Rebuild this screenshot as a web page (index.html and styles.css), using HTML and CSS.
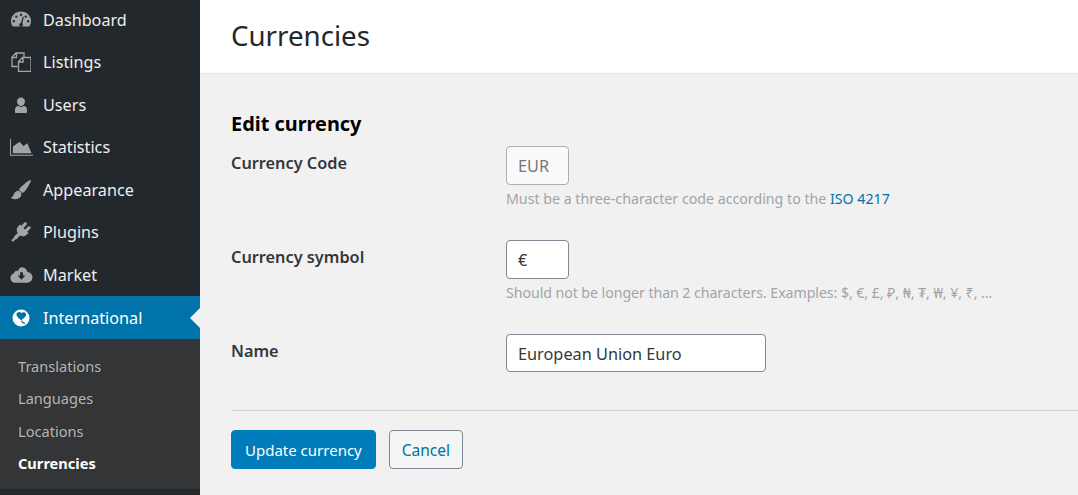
FILE: index.html
```html
<!DOCTYPE html>
<html lang="en">
<head>
  <meta charset="UTF-8">
  <meta name="viewport" content="width=device-width, initial-scale=1.0">
  <title>Currencies</title>
  <link rel="stylesheet" href="styles.css">
</head>
<body>
  <div class="admin">
    <nav class="sidebar">
      <ul class="menu">
        <li class="menu__item">
          <svg class="menu__icon" viewBox="0 0 20 20"><path fill-rule="evenodd" d="M10 1.500C4.500 1.500 0 5.700 0 11c0 1.800.4 3.400 1.200 4.800.3.500.8.800 1.400.8h14.800c.6 0 1.100-.3 1.400-.8.800-1.400 1.200-3 1.200-4.800 0-5.300-4.500-9.500-10-9.500zM10 3.500a1.200 1.200 0 1 1 0 2.400 1.200 1.200 0 0 1 0-2.400zM5.300 5.400a1.200 1.200 0 1 1 0 2.400 1.200 1.200 0 0 1 0-2.400zm9.400 0a1.200 1.200 0 1 1 0 2.400 1.200 1.200 0 0 1 0-2.400zM2.800 10a1.200 1.200 0 1 1 0 2.400 1.200 1.200 0 0 1 0-2.400zm14.400 0a1.200 1.200 0 1 1 0 2.400 1.200 1.200 0 0 1 0-2.400zM11.800 6.500l1 .3-1.500 6.600c.4.400.6.800.6 1.300 0 1-.8 1.800-1.800 1.800s-1.800-.8-1.800-1.800c0-.9.700-1.700 1.600-1.800z"/></svg>
          <span>Dashboard</span>
        </li>
        <li class="menu__item">
          <svg class="menu__icon" viewBox="0 0 20 20"><path class="menu__stroke" d="M6.500 14.500H1V5L5 1h8v4.500M5.500 1.500V5.500H1.500M12 5.500H11.500L7.500 9.500V19.500H20V5.500H12zM12 6V10H8"/></svg>
          <span>Listings</span>
        </li>
        <li class="menu__item">
          <svg class="menu__icon" viewBox="0 0 20 20"><path d="M10 2.500c2.300 0 4 1.800 4 4 0 2.100-1.700 4.500-4 4.500S6 8.600 6 6.500c0-2.200 1.700-4 4-4zM7.200 10.800c.7.700 1.700 1.200 2.800 1.200s2.100-.5 2.800-1.200c1.800.5 3.200 1.800 3.200 3.700V17c0 .6-.4 1-1 1H5c-.6 0-1-.4-1-1v-2.500c0-1.900 1.400-3.200 3.200-3.700z"/></svg>
          <span>Users</span>
        </li>
        <li class="menu__item">
          <svg class="menu__icon menu__icon--wide" viewBox="0 0 24 20"><path d="M0 1.500h1V18h23v1H0zM3 16.500V9.500L10 4.500 14 9 18 6 22.500 16.500z"/></svg>
          <span>Statistics</span>
        </li>
        <li class="menu__item">
          <svg class="menu__icon" viewBox="0 0 20 20"><path d="M18.600.2c.8-.4 1.500.3 1.200 1.100-1.300 2.900-3.600 7.400-6 10-.7.800-1.500 1.300-2.300 1.700L8 9.800c.4-1 1.100-1.900 1.900-2.700C12.500 4.600 15.900 1.700 18.600.2zM7.500 10.800c1.300 0 3 1.400 2.900 3.300-.1 3-2.800 5.200-5.900 5.200-2.100 0-3.800-.7-4.900-1.900 1.200 0 2.200-.6 2.700-1.800.9-2.100 2-4.800 5.200-4.800z"/></svg>
          <span>Appearance</span>
        </li>
        <li class="menu__item">
          <svg class="menu__icon" viewBox="0 0 20 20"><path d="M13.300.8c.6-.6 1.500-.6 2.100 0 .6.600.6 1.500 0 2.100l-3 3 1.700 1.700 3-3c.6-.6 1.500-.6 2.100 0 .6.600.6 1.500 0 2.100l-3 3 1.300 1.300-1.500 1.500c-2 2-4.900 2.400-7 1.100l-2.700 2.800c-.7.700-1.500 1.100-2.300 1.300L2 20 .3 18.300l2.300-2.200c.2-.8.600-1.600 1.300-2.300l2.800-2.800C5.100 8.900 5.500 6 7.500 4l1.500-1.500 1.300 1.300z"/></svg>
          <span>Plugins</span>
        </li>
        <li class="menu__item">
          <svg class="menu__icon menu__icon--wide" viewBox="0 0 24 20"><path fill-rule="evenodd" d="M12 2c3 0 5.500 2 6.200 4.800 2.900.2 5.300 2.500 5.300 5.500 0 3-2.500 5.700-5.500 5.700H5.500C2.700 18 .5 15.800.5 13c0-2.300 1.500-4.200 3.600-4.800C4.300 6.600 5.700 5.500 7.300 5.500c.4 0 .8 0 1.100.2C9.400 3.500 10.500 2 12 2zM10.500 7v3.500H8l4 4.500 4-4.500h-2.500V7z"/></svg>
          <span>Market</span>
        </li>
        <li class="menu__item menu__item--active">
          <svg class="menu__icon" viewBox="0 0 20 20"><path fill-rule="evenodd" d="M10 1.500a8.500 8.500 0 1 1 0 17 8.500 8.500 0 0 1 0-17zM6.500 4.500C5.700 5 5.300 6 5.500 7c.5 2 3 4 5 5.500 2-2.500 5-4 4.500-6.500-.5-2-3-2.300-4.500-1C9.500 4 8 3.500 6.500 4.500zM10 13.500c.8 1.100 2 2 3.500 2.400l1-.8c-1.500-.5-3-1.300-4-2.500z"/></svg>
          <span>International</span>
        </li>
      </ul>
      <ul class="submenu">
        <li class="submenu__item">Translations</li>
        <li class="submenu__item">Languages</li>
        <li class="submenu__item">Locations</li>
        <li class="submenu__item submenu__item--current">Currencies</li>
      </ul>
    </nav>

    <main class="main">
      <header class="page-header">
        <h1 class="page-title">Currencies</h1>
      </header>
      <div class="content">
        <h2 class="section-title">Edit currency</h2>
        <form class="form">
          <div class="form-row">
            <label class="form-label">Currency Code</label>
            <div class="form-field">
              <input class="input input--short input--disabled" type="text" value="EUR" readonly>
              <p class="hint">Must be a three-character code according to the <a class="link" href="#">ISO 4217</a></p>
            </div>
          </div>
          <div class="form-row">
            <label class="form-label">Currency symbol</label>
            <div class="form-field">
              <input class="input input--short" type="text" value="€">
              <p class="hint hint--tight">Should not be longer than 2 characters. Examples: $, €, £, ₽, ₦, ₮, ₩, ¥, ₹, ...</p>
            </div>
          </div>
          <div class="form-row">
            <label class="form-label">Name</label>
            <div class="form-field">
              <input class="input input--long" type="text" value="European Union Euro">
            </div>
          </div>
          <div class="form-actions">
            <button class="btn btn--primary" type="button">Update currency</button>
            <button class="btn btn--secondary" type="button">Cancel</button>
          </div>
        </form>
      </div>
    </main>
  </div>
</body>
</html>
```

FILE: styles.css
```css
* {
  box-sizing: border-box;
}

html, body {
  height: 100%;
}

body {
  margin: 0;
  overflow: hidden;
  background: #f1f1f1;
  font-family: "Noto Sans", "Open Sans", sans-serif;
  color: #23282d;
}

.admin {
  display: flex;
  height: 100%;
}

/* sidebar */
.sidebar {
  flex: 0 0 200px;
  background: #23282d;
  color: #eee;
}

.menu, .submenu {
  list-style: none;
  margin: 0;
  padding: 0;
}

.menu {
  margin-top: -1.5px;
}

.menu__item {
  position: relative;
  display: flex;
  align-items: center;
  height: 42.5px;
  padding-left: 11px;
  font-size: 16.2px;
  color: #eee;
}

.menu__icon {
  flex: 0 0 20px;
  width: 20px;
  height: 20px;
  margin-right: 12px;
  fill: #a0a5aa;
}

.menu__stroke {
  fill: none;
  stroke: #a0a5aa;
  stroke-width: 1.3;
}

.menu__icon--wide {
  flex-basis: 23px;
  width: 23px;
  margin-left: -1px;
  margin-right: 10px;
}

.menu__item--active {
  height: 43px;
  background: #0073aa;
  color: #fff;
}

.menu__item--active .menu__icon {
  fill: #fff;
}

.menu__item--active::after {
  content: "";
  position: absolute;
  right: 0;
  top: 50%;
  margin-top: -10px;
  border: 10px solid transparent;
  border-right-color: #f1f1f1;
  border-left-width: 0;
}

.submenu {
  background: #343536;
  padding: 11px 0 9.4px;
}

.submenu__item {
  height: 32.4px;
  line-height: 32.4px;
  padding-left: 18px;
  font-size: 14.6px;
  color: #b4b4b4;
}

.submenu__item--current {
  color: #fff;
  font-weight: 700;
}

/* main */
.main {
  flex: 1;
  min-width: 0;
}

.page-header {
  height: 74px;
  padding: 0 0 0 31px;
  background: #fff;
  border-bottom: 1px solid #e5e5e5;
  display: flex;
  align-items: center;
}

.page-title {
  margin: 0 0 4px;
  font-size: 27.7px;
  font-weight: 400;
  color: #23282d;
}

.content {
  padding: 36px 0 0 31px;
}

.section-title {
  margin: 0 0 8px;
  font-size: 19.9px;
  line-height: 28px;
  font-weight: 700;
  color: #000;
}

.form-row {
  display: grid;
  grid-template-columns: 275px 1fr;
  margin-bottom: 31px;
}

.form-label {
  font-size: 16.3px;
  font-weight: 600;
  line-height: 34px;
  color: #32373c;
}

.form-field {
  min-width: 0;
}

.input {
  display: block;
  height: 39px;
  padding: 1px 11px 0;
  border: 1px solid #7e8993;
  border-radius: 4px;
  background: #fff;
  font-family: inherit;
  font-size: 16.3px;
  color: #32373c;
}

.input--short {
  width: 63px;
}

.input--long {
  width: 260px;
  height: 38px;
}

.input--disabled {
  background: #fafafa;
  border-color: #a9b0b6;
  color: #72777c;
}

.hint {
  margin: 4px 0 0;
  font-size: 14.2px;
  line-height: 20px;
  color: #a0a5aa;
  white-space: nowrap;
}

.hint--tight {
  letter-spacing: -0.07px;
}

.link {
  color: #0073aa;
  text-decoration: none;
}

.form-actions {
  display: flex;
  gap: 13px;
  margin-top: 38px;
  padding-top: 19px;
  border-top: 1px solid #d4d4d4;
}

.btn {
  height: 39px;
  padding: 0 13px;
  border-radius: 4px;
  font-family: inherit;
  font-size: 15px;
}

.btn--primary {
  border: 1px solid #007cba;
  background: #007cba;
  color: #fff;
}

.btn--secondary {
  border: 1px solid #7e8993;
  background: #f3f5f6;
  color: #0071a1;
  font-size: 15.5px;
  padding: 0 12px;
}
```
